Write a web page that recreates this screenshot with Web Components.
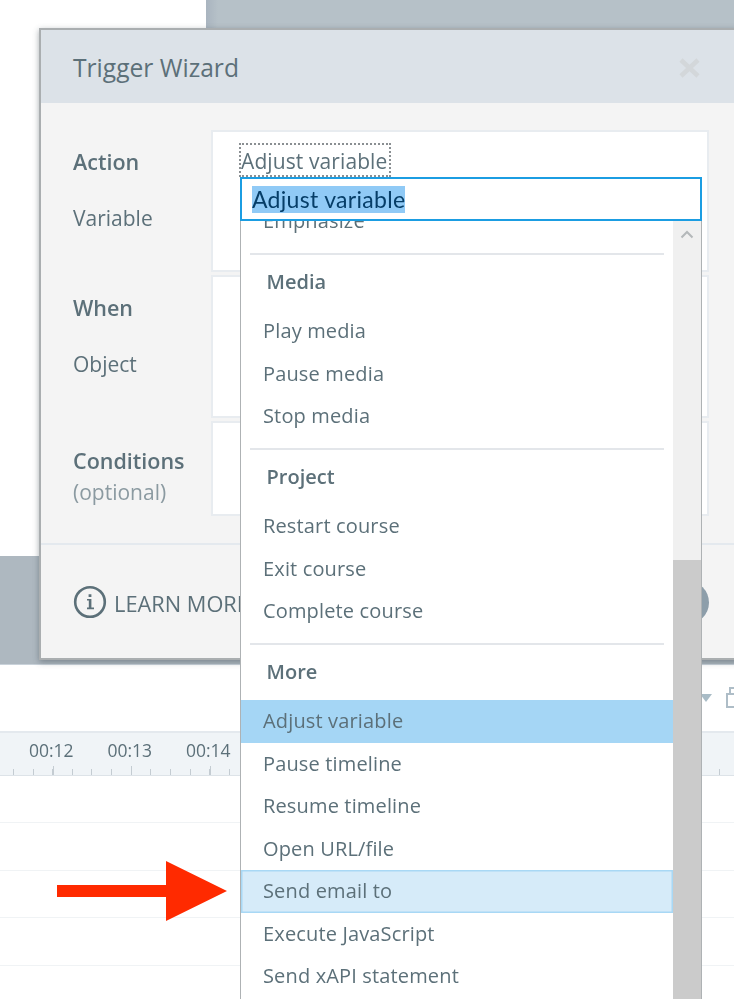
<!DOCTYPE html>
<html>
<head>
<meta charset="utf-8">
<title>Trigger Wizard</title>
<style>
  html, body { margin: 0; padding: 0; background: #fff; }
  body { width: 734px; height: 999px; overflow: hidden; position: relative; font-family: "Open Sans", sans-serif; color: #5c7079; }
</style>
</head>
<body>
<app-backdrop></app-backdrop>
<trigger-wizard></trigger-wizard>
<action-dropdown></action-dropdown>
<callout-arrow></callout-arrow>

<script>
class AppBackdrop extends HTMLElement {
  constructor() {
    super();
    this.attachShadow({ mode: "open" });
  }

  connectedCallback() {
    this.shadowRoot.innerHTML = `
      <style>
        :host { display: flex; flex-direction: column; height: 999px; filter: blur(.35px); }
        .upper { display: flex; height: 556px; }
        .upper .blank { width: 206px; background: #fff; }
        .upper .shade { flex: 1; background: linear-gradient(90deg, #a9b4bf 0, #b6c1c8 12px); }
        .band { height: 109px; background: #aeb8c0; border-bottom: 1px solid #c9d2da; box-sizing: border-box; }
        .toolbar { height: 66px; display: flex; justify-content: flex-end; align-items: center; gap: 14px; background: #fff; }
        .toolbar svg { display: block; flex: none; }
        .ruler { height: 45px; background: #f0f4f7; border-top: 2px solid #e4e9ee; border-bottom: 1px solid #dde3e8; box-sizing: border-box; display: flex; flex-direction: column; }
        .labels { display: flex; padding-left: 12px; height: 33px; align-items: center; }
        .labels span { width: 78.5px; text-align: center; font-size: 17.5px; color: #5c7079; }
        .ticks {
          flex: 1;
          background-image:
            repeating-linear-gradient(90deg, transparent 0, transparent 52.6px, #c4ccd2 52.6px, #c4ccd2 53.6px, transparent 53.6px, transparent 78.5px),
            repeating-linear-gradient(90deg, transparent 0, transparent 13px, #c4ccd2 13px, #c4ccd2 14px, transparent 14px, transparent 19.62px);
          background-size: 100% 100%, 100% 6px;
          background-position: 0 100%, 0 100%;
          background-repeat: no-repeat;
        }
        .row { height: 47.4px; box-sizing: border-box; border-bottom: 1.5px solid #f0f3f5; background: #fff; }
      </style>
      <div class="upper"><div class="blank"></div><div class="shade"></div></div>
      <div class="band"></div>
      <div class="toolbar">
        <svg width="12" height="8" viewBox="0 0 12 8"><path d="M0 0h12L6 8z" fill="#a9bcc6"/></svg>
        <svg width="8" height="24" viewBox="0 0 8 24"><path d="M1 8h8v13H1zM4 8V2h5" fill="none" stroke="#aebdc7" stroke-width="2"/></svg>
      </div>
      <div class="ruler">
        <div class="labels"><span>00:12</span><span>00:13</span><span>00:14</span></div>
        <div class="ticks"></div>
      </div>
      <div class="row"></div><div class="row"></div><div class="row"></div><div class="row"></div>
    `;
  }
}

class TriggerWizard extends HTMLElement {
  constructor() {
    super();
    this.attachShadow({ mode: "open" });
  }

  connectedCallback() {
    this.shadowRoot.innerHTML = `
      <style>
        :host {
          display: flex; flex-direction: column;
          position: absolute; left: 39px; top: 28px; width: 700px; height: 632px;
          box-sizing: border-box; background: #f4f4f4;
          border: 2px solid #aaaeb0; border-right: 0;
          box-shadow: 0 2px 6px rgba(60,70,80,.45);
          filter: blur(.35px);
        }
        header { height: 73px; background: #dce2e8; display: flex; align-items: center; justify-content: space-between; padding: 2px 0 0 32px; flex: none; box-sizing: border-box; }
        h1 { margin: 0; font-size: 24.6px; font-weight: 400; color: #5c7079; }
        .close { display: block; margin-right: 39px; }
        .form { flex: 1; padding: 27px 0 27px 32px; display: flex; flex-direction: column; gap: 3px; border-bottom: 2px solid #e4e9ee; }
        .group { display: grid; grid-template-columns: 138px 498px; height: 142px; }
        .group.tall { height: 143px; }
        .group.short { height: 95px; }
        .labels { padding-top: 18px; display: flex; flex-direction: column; gap: 28px; font-size: 21px; line-height: 28px; }
        .labels b { font-weight: 600; font-size: 21.5px; }
        .tall .labels { padding-top: 19px; }
        .short .labels { padding-top: 26px; gap: 3px; }
        .opt { color: #8b9aa1; }
        .box { background: #fff; border: 2px solid #e8ecf0; box-sizing: border-box; padding: 11px 26px; }
        .combo { display: inline-block; border: 2px dotted #8a8f92; font-size: 21px; line-height: 27px; padding: 3px 2px 0 0; color: #5c7079; letter-spacing: .1px; }
        footer { height: 114px; flex: none; display: flex; align-items: center; justify-content: space-between; padding: 0 0 0 32px; box-sizing: border-box; width: 668px; }
        .learn { display: flex; align-items: center; gap: 7px; font-size: 21.8px; color: #5c7079; white-space: nowrap; }
        .learn span { padding-top: 3px; }
        .learn svg { display: block; }
        .round { width: 43px; height: 43px; border-radius: 50%; background: #8d9eaa; }
      </style>
      <header>
        <h1>Trigger Wizard</h1>
        <svg class="close" width="21" height="20" viewBox="0 0 21 20"><path d="M2 2l17 16M19 2L2 18" fill="none" stroke="#d3d7da" stroke-width="4.6"/></svg>
      </header>
      <div class="form">
        <section class="group">
          <div class="labels"><b>Action</b><span>Variable</span></div>
          <div class="box"><span class="combo">Adjust variable</span></div>
        </section>
        <section class="group tall">
          <div class="labels"><b>When</b><span>Object</span></div>
          <div class="box"></div>
        </section>
        <section class="group short">
          <div class="labels"><b>Conditions</b><span class="opt">(optional)</span></div>
          <div class="box"></div>
        </section>
      </div>
      <footer>
        <div class="learn">
          <svg width="34" height="34" viewBox="0 0 34 34"><circle cx="17" cy="17" r="14.8" fill="none" stroke="#5c7079" stroke-width="2.6"/><path d="M14 14h4.400v8.600H21v1.600h-7v-1.600h1.800v-7H14zM15.600 9.200h2.800V12h-2.800z" fill="#5c7079"/></svg>
          <span>LEARN MORE</span>
        </div>
        <div class="round"></div>
      </footer>
    `;
  }
}

const MENU = [
  { title: "Media", items: ["Play media", "Pause media", "Stop media"] },
  { title: "Project", items: ["Restart course", "Exit course", "Complete course"] },
  { title: "More", items: ["Adjust variable", "Pause timeline", "Resume timeline", "Open URL/file", "Send email to", "Execute JavaScript", "Send xAPI statement"] },
];

class ActionDropdown extends HTMLElement {
  constructor() {
    super();
    this.attachShadow({ mode: "open" });
  }

  connectedCallback() {
    const sections = MENU.map((s) => `
      <div class="rule"></div>
      <div class="head">${s.title}</div>
      ${s.items.map((i) => {
        const cls = i === "Adjust variable" ? "item current" : i === "Send email to" ? "item hover" : "item";
        return `<div class="${cls}">${i}</div>`;
      }).join("")}
    `).join("");

    this.shadowRoot.innerHTML = `
      <style>
        :host { display: flex; flex-direction: column; position: absolute; left: 240px; top: 177px; width: 461.500px; height: 822px; overflow: hidden; font-size: 20px; color: #5c7079; filter: blur(.35px); }
        .field { position: relative; z-index: 1; height: 44px; flex: none; box-sizing: border-box; border: 2px solid #1b9de2; background: #fff; padding: 6px 10px; display: flex; align-items: center; }
        .field span { background: #90caf6; color: #063e68; font-family: Lato, sans-serif; font-size: 23px; letter-spacing: .3px; line-height: 27px; }
        .list { flex: 1; display: flex; min-height: 0; margin-top: -21px; background: #fff; border-left: 1.500px solid #aeb2b4; border-right: 1.500px solid #aeb2b4; }
        .content { flex: 1; min-width: 0; }
        .item { height: 42.500px; line-height: 42.500px; padding-left: 22px; white-space: nowrap; box-sizing: border-box; letter-spacing: .15px; }
        .current { background: #a5d6f5; }
        .hover { background: #d6ebf9; box-shadow: inset 0 0 0 1.500px #a8d8f5; }
        .rule { height: 2px; margin: 10px 8.500px 0 8.500px; background: #e3e6ea; }
        .head { height: 55.600px; line-height: 54px; padding-left: 25.500px; font-weight: 600; }
        .bar { width: 28px; flex: none; display: flex; flex-direction: column; background: #f0f0f0; }
        .track { height: 339px; margin-top: 21px; padding-top: 9px; box-sizing: border-box; flex: none; }
        .track svg { display: block; margin: 0 auto; }
        .thumb { flex: 1; background: #cbcbcb; }
      </style>
      <div class="field"><span>Adjust variable</span></div>
      <div class="list">
        <div class="content">
          <div class="item">Emphasize</div>
          ${sections}
        </div>
        <div class="bar">
          <div class="track"><svg width="14" height="9" viewBox="0 0 14 9"><path d="M1.500 7.500L7 2l5.500 5.500" fill="none" stroke="#b4b8ba" stroke-width="2"/></svg></div>
          <div class="thumb"></div>
        </div>
      </div>
    `;
  }
}

class CalloutArrow extends HTMLElement {
  constructor() {
    super();
    this.attachShadow({ mode: "open" });
  }

  connectedCallback() {
    this.shadowRoot.innerHTML = `
      <style>
        :host { display: block; position: absolute; left: 57px; top: 860px; width: 170px; height: 62px; filter: blur(.35px); }
        svg { display: block; }
      </style>
      <svg width="170" height="62" viewBox="0 0 170 62"><path d="M0 25h109V1l61 30-61 30V37H0z" fill="#ff2a00"/></svg>
    `;
  }
}

customElements.define("app-backdrop", AppBackdrop);
customElements.define("trigger-wizard", TriggerWizard);
customElements.define("action-dropdown", ActionDropdown);
customElements.define("callout-arrow", CalloutArrow);
</script>
</body>
</html>
